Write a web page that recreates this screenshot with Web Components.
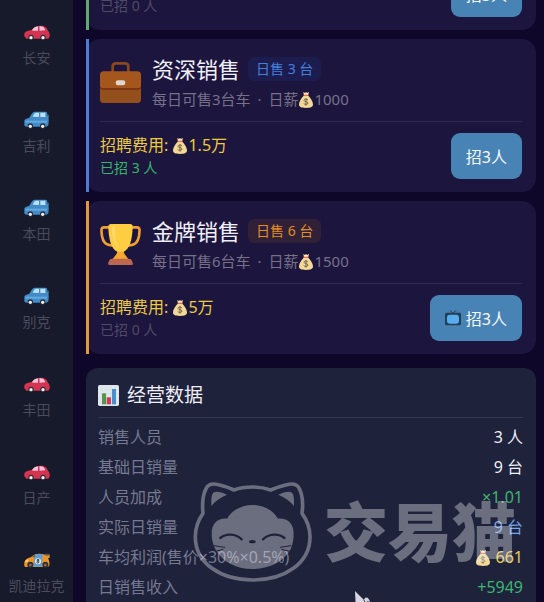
<!DOCTYPE html>
<html lang="zh-CN">
<head>
<meta charset="UTF-8">
<meta name="viewport" content="width=device-width, initial-scale=1">
<title>销售团队</title>
<style>
    html, body {
        margin: 0;
        height: 100%;
    }
    body {
        background: #0e0729;
        color: #f0eff8;
        font-family: "Noto Sans", "Noto Sans CJK SC", sans-serif;
        font-size: 16px;
        overflow: hidden;
    }
    .dot {
        margin: 0 3px;
    }
</style>
</head>
<body>
<sales-app>
    <brand-link slot="brand" icon="car">长安</brand-link>
    <brand-link slot="brand" icon="suv">吉利</brand-link>
    <brand-link slot="brand" icon="suv">本田</brand-link>
    <brand-link slot="brand" icon="suv">别克</brand-link>
    <brand-link slot="brand" icon="car">丰田</brand-link>
    <brand-link slot="brand" icon="car">日产</brand-link>
    <brand-link slot="brand" icon="racer">凯迪拉克</brand-link>

    <staff-card class="scrolled" style="--accent: #5cad68">
        <span slot="hired">已招 0 人</span>
        <hire-button slot="action">招3人</hire-button>
    </staff-card>
    <staff-card style="--accent: #4c7dda; --tag: #4380dd; --tag-bg: #1d1c4e; --hired: #35b56c">
        <emoji-icon slot="icon" name="briefcase"></emoji-icon>
        <span slot="name">资深销售</span>
        <span slot="tag">日售 3 台</span>
        <span slot="desc">每日可售3台车 <span class="dot">·</span> 日薪<emoji-icon name="money"></emoji-icon>1000</span>
        <span slot="fee">招聘费用: <emoji-icon name="money"></emoji-icon>1.5万</span>
        <span slot="hired">已招 3 人</span>
        <hire-button slot="action">招3人</hire-button>
    </staff-card>
    <staff-card style="--accent: #e8982f; --tag: #e58c25; --tag-bg: #302038">
        <emoji-icon slot="icon" name="trophy"></emoji-icon>
        <span slot="name">金牌销售</span>
        <span slot="tag">日售 6 台</span>
        <span slot="desc">每日可售6台车 <span class="dot">·</span> 日薪<emoji-icon name="money"></emoji-icon>1500</span>
        <span slot="fee">招聘费用: <emoji-icon name="money"></emoji-icon>5万</span>
        <span slot="hired">已招 0 人</span>
        <hire-button slot="action" icon="tv">招3人</hire-button>
    </staff-card>
    <stats-panel></stats-panel>

    <site-mark slot="overlay"></site-mark>
</sales-app>

<script>
// 图标
const redCar = `
    <path fill="#d5334f" d="M1 49c-1-9 1-12 7-15 4-2 9-3 15-4 7-9 15-13 27-13 13 0 19 6 22 15 4 3 6 9 5 18l-4 6H7z"/>
    <path fill="#f3c3dc" d="M24 30c5-7 10-10 18-11v13H27zM46 19c10-1 16 4 18 12l-17 1z"/>
    <circle cx="21" cy="52" r="8" fill="#292f3c"/><circle cx="57" cy="52" r="8" fill="#292f3c"/>
    <circle cx="21" cy="53" r="5" fill="#eceef2"/><circle cx="57" cy="53" r="5" fill="#eceef2"/>`;
const blueCar = `
    <path fill="#428bc8" d="M1 52V38c1-5 5-6 15-9 5-9 8-16 15-18h33c5 0 6 3 8 16l3 4-2 21-5 4H5z"/>
    <path fill="#62aae4" d="M4 38h65v6H4z"/>
    <path fill="#bde0f5" d="M26 26c3-7 6-12 10-12h9v13zM49 14h15v13H49z"/>
    <path fill="#2a648f" d="M72 20h3v16h-3z"/>
    <circle cx="19" cy="54" r="8" fill="#292f3c"/><circle cx="56" cy="54" r="8" fill="#292f3c"/>
    <circle cx="19" cy="55" r="5" fill="#eceef2"/><circle cx="56" cy="55" r="5" fill="#eceef2"/>`;
const raceCar = `
    <path fill="#e9952e" d="M1 53C0 39 5 32 20 28c10-9 15-11 28-11 10 0 14 3 20 5l9-1v8l-5 2c4 6 5 14 4 22l-5 4H3z"/>
    <path fill="#50545e" d="M62 17h15v5H62zM24 27l8-7 3 8z"/>
    <path fill="#629cc9" d="M36 18h20l-3 38H28l2-25z"/>
    <circle cx="42" cy="40" r="9" fill="#eef3f6"/>
    <path fill="none" stroke="#303843" stroke-width="3" d="M42 34c-5 1-3 5 0 5s5 5 0 6-5-5 0-6 5-5 0-5"/>
    <path fill="#ffcf57" d="M2 40l9-7 3 6-9 5z"/>
    <circle cx="19" cy="50" r="9" fill="#292f3c"/><circle cx="64" cy="50" r="9" fill="#292f3c"/>
    <circle cx="19" cy="51" r="4" fill="#a56c31"/><circle cx="64" cy="51" r="4" fill="#a56c31"/>`;

const ICONS = {
    car: ['0 0 78 78', redCar],
    suv: ['0 0 78 78', blueCar],
    racer: ['0 0 78 78', raceCar],
    briefcase: ['0 0 123 123', `
        <path fill="none" stroke="#89491f" stroke-width="8" d="M38 32V14q0-10 10-10h27q10 0 10 10v18"/>
        <rect y="50" width="123" height="73" rx="11" fill="#94501c"/>
        <path fill="#702e13" d="M0 60h123v18q-2 5-10 5H10q-8 0-10-5z"/>
        <path fill="#a5561d" d="M11 28h101q11 0 11 11v31q0 9-10 9H10Q0 79 0 70V39q0-11 11-11z"/>
        <rect x="47" y="55" width="29" height="15" rx="7" fill="#ddd8d1"/>`],
    trophy: ['0 0 123 123', `
        <path fill="none" stroke="#f09e32" stroke-width="8" stroke-linejoin="round" d="M29 10H12C2 10 4 20 6 36c3 18 9 27 34 29M94 10h17c10 0 8 10 6 26-3 18-9 27-34 29"/>
        <path fill="#f4a82e" d="M52 72h19l1 16 13 17H38l13-17z"/>
        <path fill="#ffcd42" d="M33 0h57c5 0 9 3 8 8-1 41-10 67-27 75H52C35 75 26 49 25 8c0-5 3-8 8-8z"/>
        <path fill="#ffd866" d="M35 6h10c0 31 3 51 13 69-14-11-23-34-23-69z"/>
        <path fill="#bd6650" d="M36 104h51q7 0 9 7l3 8q0 4-5 4H29q-5 0-5-4l3-8q2-7 9-7z"/>`],
    money: ['0 0 42 48', `
        <path fill="#f6d895" d="M14 11C8 18 0 27 0 37c0 8 6 11 21 11s21-3 21-11c0-10-8-19-14-26z"/>
        <path fill="#ffe8b6" d="M13 0l5 3 3-3 3 3 6-3-3 11H15z"/>
        <path fill="#df7167" d="M14 8h14v4H14z"/>
        <path fill="none" stroke="#6d6854" stroke-width="3" d="M27 24c-3-4-12-4-12 1s12 3 12 8-10 6-13 1M21 18v23"/>`],
    tv: ['0 0 48 48', `
        <path fill="none" stroke="#233f54" stroke-width="3" d="M15 1l9 9 9-9"/>
        <rect y="8" width="48" height="38" rx="4" fill="#263f52"/>
        <rect x="6" y="14" width="36" height="27" rx="9" fill="#58adf0"/>`],
    chart: ['0 0 63 63', `
        <rect width="63" height="63" rx="5" fill="#e1e8ec"/>
        <path stroke="#c6d4dc" stroke-width="1" d="M0 13h63M0 26h63M0 39h63M0 52h63M13 0v63M26 0v63M39 0v63M52 0v63"/>
        <path fill="#56934b" d="M12 25h12v33H12z"/>
        <path fill="#ce3c56" d="M26 37h13v21H26z"/>
        <path fill="#4a8fca" d="M42 12h12v46H42z"/>`]
};

class EmojiIcon extends HTMLElement {
    constructor() {
        super();
        this.attachShadow({ mode: 'open' });
    }

    connectedCallback() {
        const [box, shapes] = ICONS[this.getAttribute('name')];
        this.shadowRoot.innerHTML = `
        <style>
            :host {
                display: inline-block;
                width: var(--icon-width, 16px);
                height: var(--icon-height, 16px);
                vertical-align: -3px;
            }
            svg {
                display: block;
                width: 100%;
                height: 100%;
            }
        </style>
        <svg viewBox="${box}" aria-hidden="true">${shapes}</svg>
        `;
    }
}
customElements.define('emoji-icon', EmojiIcon);

// 左侧品牌
class BrandLink extends HTMLElement {
    constructor() {
        super();
        this.attachShadow({ mode: 'open' });
    }

    connectedCallback() {
        this.shadowRoot.innerHTML = `
        <style>
            :host {
                display: block;
                flex: none;
            }
            a {
                display: flex;
                flex-direction: column;
                align-items: center;
                justify-content: center;
                gap: 2px;
                height: 88px;
                color: #4a4b5d;
                font-size: 14px;
                line-height: 20px;
                text-decoration: none;
                white-space: nowrap;
            }
            emoji-icon {
                --icon-width: 26px;
                --icon-height: 26px;
            }
        </style>
        <a href="#">
            <emoji-icon name="${this.getAttribute('icon')}"></emoji-icon>
            <span><slot></slot></span>
        </a>
        `;
    }
}
customElements.define('brand-link', BrandLink);

class HireButton extends HTMLElement {
    constructor() {
        super();
        this.attachShadow({ mode: 'open' });
    }

    connectedCallback() {
        const icon = this.getAttribute('icon');
        this.shadowRoot.innerHTML = `
        <style>
            :host { display: block; }
            button {
                display: flex;
                align-items: center;
                gap: 5px;
                height: 46px;
                padding: 0 15px;
                border: none;
                border-radius: 9px;
                background: #4883b5;
                color: #f7fafc;
                font: inherit;
                cursor: pointer;
            }
        </style>
        <button type="button">
            ${icon ? `<emoji-icon name="${icon}"></emoji-icon>` : ''}
            <span><slot></slot></span>
        </button>
        `;
    }
}
customElements.define('hire-button', HireButton);

// 销售人员卡片
class StaffCard extends HTMLElement {
    constructor() {
        super();
        this.attachShadow({ mode: 'open' });
    }

    connectedCallback() {
        const head = `
        <header>
            <slot name="icon"></slot>
            <div class="text">
                <div class="title">
                    <slot name="name"></slot>
                    <div class="tag"><slot name="tag"></slot></div>
                </div>
                <div class="desc"><slot name="desc"></slot></div>
            </div>
        </header>`;
        this.shadowRoot.innerHTML = `
        <style>
            :host {
                display: block;
                position: relative;
                padding: 15px 14px 13px 14px;
                border-radius: 14px;
                background: #1c153d;
            }
            /* 左侧色条 */
            :host::before {
                content: "";
                position: absolute;
                inset: 0 auto 0 0;
                width: 3px;
                background: var(--accent);
            }
            header {
                display: flex;
                align-items: center;
                gap: 11px;
                padding-bottom: 10px;
                border-bottom: 1px solid #302a50;
                margin-bottom: 11px;
            }
            ::slotted(emoji-icon) {
                --icon-width: 41px;
                --icon-height: 41px;
            }
            .title {
                display: flex;
                align-items: center;
                gap: 8px;
                font-size: 22px;
                line-height: 30px;
                margin-bottom: 3px;
            }
            .tag {
                padding: 0 8px;
                border-radius: 6px;
                background: var(--tag-bg);
                color: var(--tag);
                font-size: 14px;
                line-height: 24px;
            }
            .desc {
                color: #767189;
                font-size: 15px;
                line-height: 24px;
            }
            footer {
                display: flex;
                align-items: flex-end;
                justify-content: space-between;
            }
            .fee {
                color: #edcb3d;
                line-height: 24px;
            }
            .hired {
                color: var(--hired, #504b67);
                font-size: 14px;
                line-height: 22px;
            }
        </style>
        ${this.querySelector('[slot=name]') ? head : ''}
        <footer>
            <div>
                <div class="fee"><slot name="fee"></slot></div>
                <div class="hired"><slot name="hired"></slot></div>
            </div>
            <slot name="action"></slot>
        </footer>
        `;
    }
}
customElements.define('staff-card', StaffCard);

// 经营数据
class StatsPanel extends HTMLElement {
    constructor() {
        super();
        this.attachShadow({ mode: 'open' });
    }

    connectedCallback() {
        this.shadowRoot.innerHTML = `
        <style>
            :host {
                display: block;
                padding: 13px 13px 16px 12px;
                border-radius: 12px;
                background: #1e223b;
            }
            h2 {
                display: flex;
                align-items: center;
                gap: 8px;
                margin: 0 0 4px;
                padding-bottom: 8px;
                border-bottom: 1px solid #343850;
                font-size: 19px;
                font-weight: 400;
                line-height: 28px;
            }
            h2 emoji-icon {
                --icon-width: 21px;
                --icon-height: 21px;
            }
            table {
                width: 100%;
                border-collapse: collapse;
                line-height: 30px;
            }
            th, td {
                padding: 0;
                font-weight: 400;
            }
            th {
                color: #767990;
                text-align: left;
            }
            td {
                text-align: right;
            }
            .green { color: #3fb46f; }
            .blue { color: #72a6ef; }
            .gold { color: #edcb4b; }
        </style>
        <h2><emoji-icon name="chart"></emoji-icon>经营数据</h2>
        <table>
            <tr><th scope="row">销售人员</th><td>3 人</td></tr>
            <tr><th scope="row">基础日销量</th><td>9 台</td></tr>
            <tr><th scope="row">人员加成</th><td class="green">×1.01</td></tr>
            <tr><th scope="row">实际日销量</th><td class="blue">9 台</td></tr>
            <tr><th scope="row">车均利润(售价×30%×0.5%)</th><td class="gold"><emoji-icon name="money"></emoji-icon> 661</td></tr>
            <tr><th scope="row">日销售收入</th><td class="green">+5949</td></tr>
        </table>
        `;
    }
}
customElements.define('stats-panel', StatsPanel);

// 水印和指针，盖在内容上面
class SiteMark extends HTMLElement {
    constructor() {
        super();
        this.attachShadow({ mode: 'open' });
    }

    connectedCallback() {
        this.shadowRoot.innerHTML = `
        <style>
            :host {
                display: block;
                position: absolute;
                inset: 0;
                pointer-events: none;
            }
            .mark {
                position: absolute;
                right: 28px;
                bottom: 18px;
                display: flex;
                align-items: center;
                gap: 12px;
                opacity: 0.37;
                color: #f0f0f2;
                font-size: 64px;
                font-weight: 900;
                line-height: 96px;
            }
            .cat {
                width: 119px;
                height: 104px;
            }
            .pointer {
                position: absolute;
                left: 354px;
                bottom: -12px;
                width: 18px;
                height: 24px;
            }
        </style>
        <div class="mark">
            <svg class="cat" viewBox="35 30 357 312" aria-hidden="true">
                <mask id="face">
                    <rect width="450" height="396" fill="#fff"/>
                    <g fill="none" stroke="#000" stroke-width="7" stroke-linecap="round">
                        <path d="M117 204c16-14 46-14 64 4M309 204c-16-14-46-14-64 4"/>
                        <path stroke-width="3" d="M98 227l32 5M102 244l23-6M329 227l-32 5M325 244l-23-6"/>
                    </g>
                    <ellipse cx="213" cy="215" rx="10" ry="5"/>
                </mask>
                <path fill="none" stroke="currentColor" stroke-width="11" stroke-linejoin="round" d="M65 130C62 100 66 72 74 56c6-14 22-16 38-12 18 4 34 10 46 16 32-12 78-12 110 0 14-6 30-12 48-16 16-4 32-2 38 12 8 16 12 44 8 74 16 22 24 46 24 70 0 80-76 130-172 130S42 280 42 200c0-24 8-48 23-70z"/>
                <path fill="currentColor" d="M90 108c0-18-1-32 6-40 8-6 24-2 41 6-19 8-35 18-47 34zM338 108c0-18 1-32-6-40-8-6-24-2-41 6 19 8 35 18 47 34z"/>
                <path fill="currentColor" mask="url(#face)" d="M137 146c13-24 43-41 77-41s62 17 76 41c30-2 47 16 47 44 0 19-3 33-9 48-22 37-62 59-114 59s-89-22-111-57c-8-15-12-31-12-50 0-28 17-46 46-44z"/>
            </svg>
            <span>交易猫</span>
        </div>
        <svg class="pointer" viewBox="0 0 18 24" aria-hidden="true">
            <path fill="#d5d6de" d="M1 1l9 9c1-4 5-3 6 2l-3-1 4 9-15 2z"/>
            <path fill="none" stroke="#4d5063" stroke-width="1" d="M10 10l2 5"/>
        </svg>
        `;
    }
}
customElements.define('site-mark', SiteMark);

class SalesApp extends HTMLElement {
    constructor() {
        super();
        this.attachShadow({ mode: 'open' });
    }

    connectedCallback() {
        this.shadowRoot.innerHTML = `
        <style>
            :host {
                display: flex;
                position: relative;
                height: 100vh;
                overflow: hidden;
            }
            nav {
                flex: none;
                width: 73px;
                background: #171a2a;
            }
            main {
                flex: 1;
                min-width: 0;
                display: flex;
                flex-direction: column;
                gap: 9px;
                padding: 0 8px 0 13px;
            }
            ::slotted(*) {
                flex: none;
            }
            /* 列表已向上滚动 */
            ::slotted(.scrolled) {
                margin-top: -44px;
            }
            ::slotted(stats-panel) {
                margin-top: 5px;
            }
        </style>
        <nav><slot name="brand"></slot></nav>
        <main><slot></slot></main>
        <slot name="overlay"></slot>
        `;
    }
}
customElements.define('sales-app', SalesApp);
</script>
</body>
</html>
